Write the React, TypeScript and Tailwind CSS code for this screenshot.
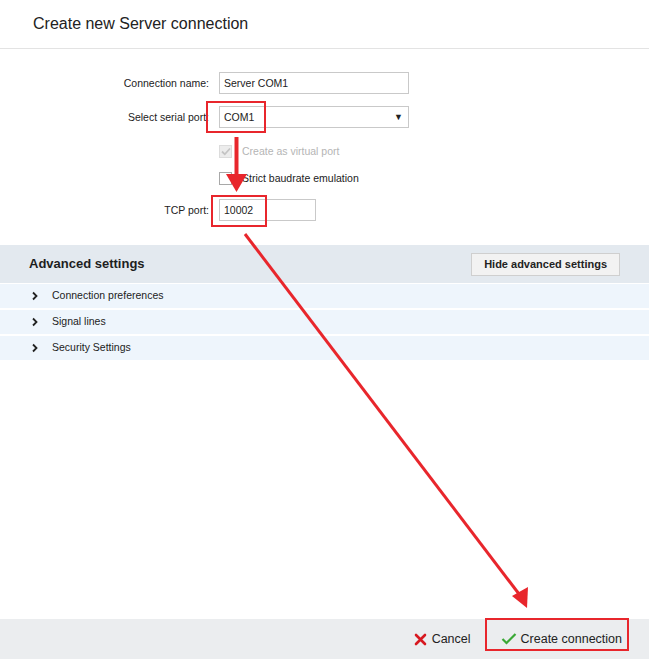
import { FC } from "react";

const font = { fontFamily: '"Liberation Sans", Arial, sans-serif' };

const Chevron: FC = () => (
  <svg width="8" height="10" viewBox="0 0 8 10" className="shrink-0">
    <path d="M2 1.5 L5.5 5 L2 8.5" fill="none" stroke="#222" strokeWidth="1.8" />
  </svg>
);

// red annotation marks drawn on top of the dialog
const Annotations: FC = () => (
  <svg
    className="absolute inset-0 pointer-events-none"
    width="649"
    height="659"
    viewBox="0 0 649 659"
  >
    <g fill="none" stroke="#e8262c" strokeWidth="2">
      <rect x="207" y="102" width="58" height="30" />
      <rect x="212" y="196" width="54" height="30" />
      <rect x="486" y="619" width="142" height="31" />
    </g>
    <line x1="236.5" y1="137" x2="236.5" y2="178" stroke="#e8262c" strokeWidth="4" />
    <polygon points="226,174 247,174 236.5,192" fill="#e8262c" />
    <line x1="245" y1="234" x2="519" y2="594" stroke="#e8262c" strokeWidth="3" />
    <polygon points="512,596 528,587 527,608" fill="#e8262c" />
  </svg>
);

const App: FC = () => {
  const rows = ["Connection preferences", "Signal lines", "Security Settings"];

  return (
    <div className="relative w-[649px] h-[659px] bg-white flex flex-col overflow-hidden" style={font}>
      <div className="h-[49px] border-b border-[#e3e3e3] flex items-center pl-[33px]">
        <h1 className="text-[16px] text-[#222]">Create new Server connection</h1>
      </div>

      <div className="grid grid-cols-[209px_190px] gap-x-[10px] items-center pt-[23px] text-[10.5px] leading-[13px] text-[#222]">
        <label className="text-right">Connection name:</label>
        <div className="h-[22px] border border-[#c9c9c9] flex items-center px-[4px]">Server COM1</div>

        <label className="text-right mt-[12px]">Select serial port:</label>
        <div className="h-[22px] mt-[12px] border border-[#c9c9c9] flex items-center justify-between px-[4px]">
          <span>COM1</span>
          <span className="text-[9px] pr-[1px]">▼</span>
        </div>

        <div />
        <div className="h-[13px] flex items-center gap-[10px] mt-[17px] text-[#b5b5b5]">
          <span className="w-[13px] h-[13px] border border-[#dcdcdc] bg-[#ececec] flex items-center justify-center">
            <svg width="10" height="9" viewBox="0 0 10 9">
              <path d="M1 4.5 L3.8 7.3 L9 1.5" fill="none" stroke="#c4c4c4" strokeWidth="1.8" />
            </svg>
          </span>
          <span>Create as virtual port</span>
        </div>

        <div />
        <div className="h-[13px] flex items-center gap-[10px] mt-[14px]">
          <span className="w-[13px] h-[13px] border border-[#a8a8a8] bg-white" />
          <span>Strict baudrate emulation</span>
        </div>

        <label className="text-right mt-[14px]">TCP port:</label>
        <div className="w-[97px] h-[22px] mt-[14px] border border-[#c9c9c9] flex items-center px-[4px]">10002</div>
      </div>

      <div className="mt-[24px] h-[38px] bg-[#e3e9ef] flex items-center justify-between pl-[29px] pr-[29px]">
        <span className="text-[13px] font-bold text-[#1e1e1e]">Advanced settings</span>
        <button className="h-[23px] px-[12px] bg-[#f2f2f2] border border-[#cfcfcf] text-[11px] font-bold text-[#222]">
          Hide advanced settings
        </button>
      </div>

      <div className="flex flex-col gap-[2px] mt-[1px]">
        {rows.map((r) => (
          <div key={r} className="h-[24px] bg-[#eef5fc] flex items-center gap-[13px] pl-[31px] text-[10.5px] text-[#222]">
            <Chevron />
            <span>{r}</span>
          </div>
        ))}
      </div>

      <div className="flex-1" />

      <div className="h-[40px] bg-[#ebedef] flex items-center justify-end pr-[27px] gap-[30px] text-[12.5px] text-[#222]">
        <span className="flex items-center gap-[5px]">
          <svg width="13" height="13" viewBox="0 0 13 13">
            <path d="M2 2 L11 11 M11 2 L2 11" stroke="#d71920" strokeWidth="2.6" strokeLinecap="round" />
          </svg>
          Cancel
        </span>
        <span className="flex items-center gap-[4px]">
          <svg width="16" height="12" viewBox="0 0 16 12">
            <path d="M1.5 6 L5.5 10 L14.5 1" fill="none" stroke="#3aa835" strokeWidth="2.2" />
          </svg>
          Create connection
        </span>
      </div>

      <Annotations />
    </div>
  );
};

export default App;
